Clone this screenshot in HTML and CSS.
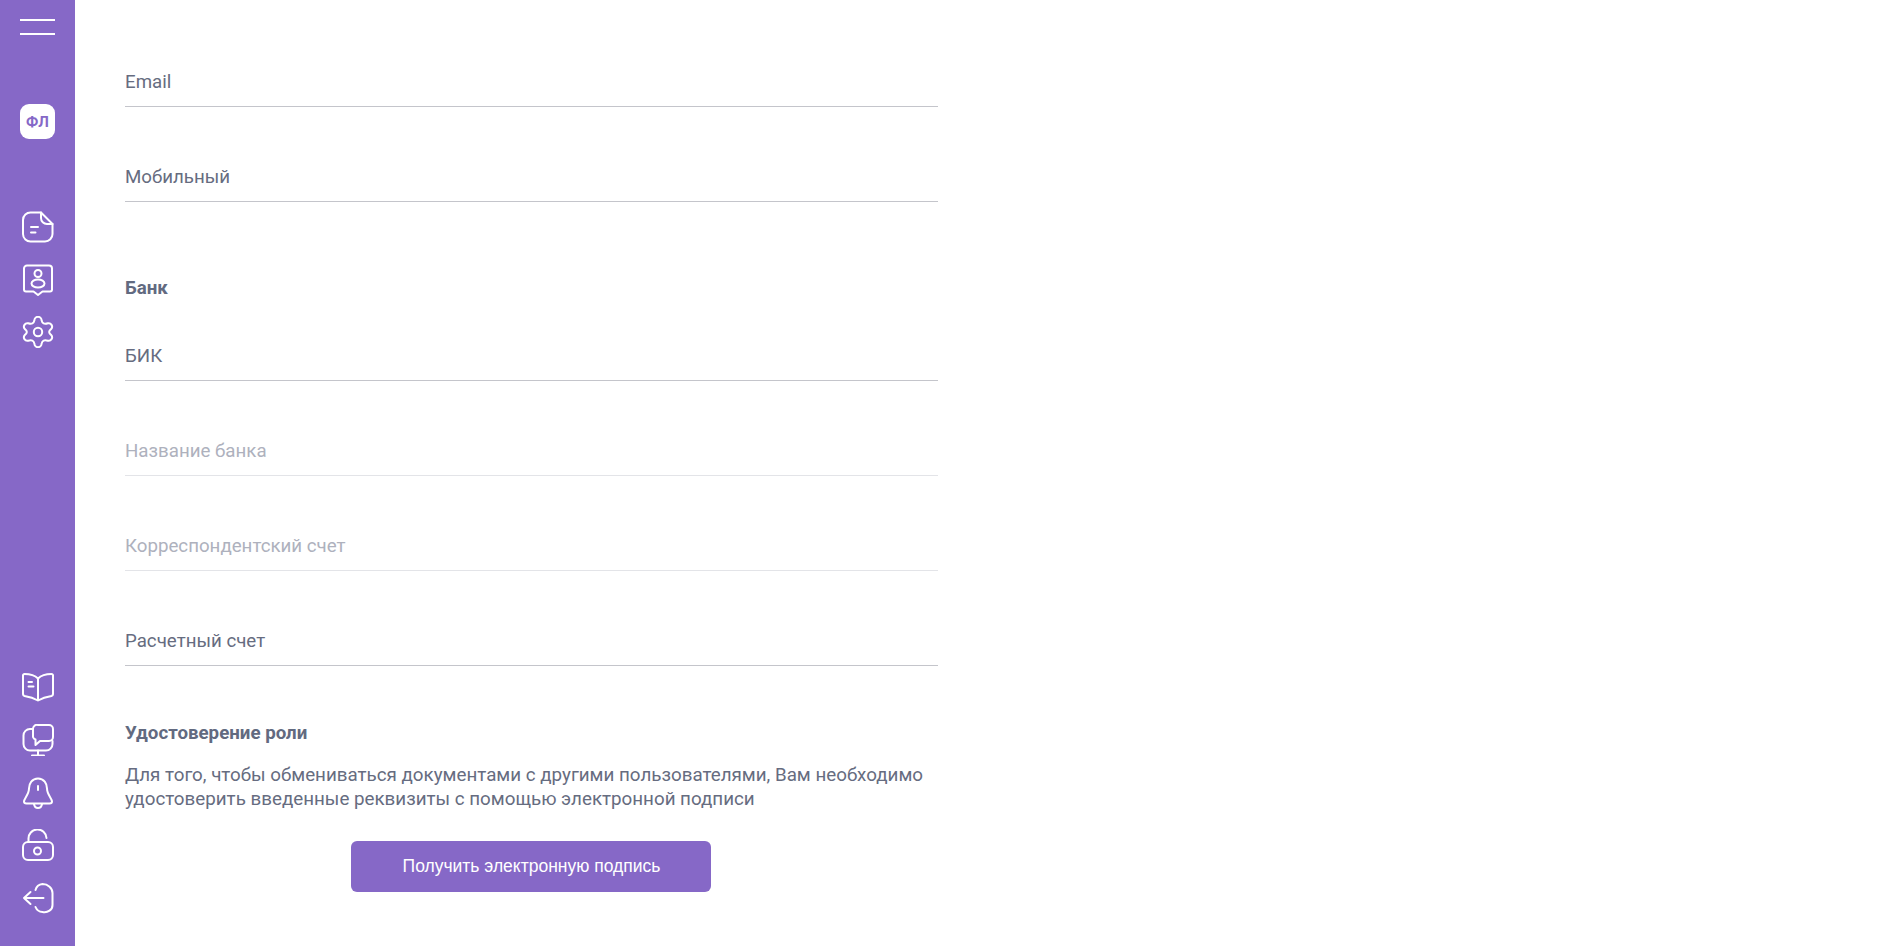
FILE: index.html
```html
<!DOCTYPE html>
<html lang="ru">
<head>
<meta charset="utf-8">
<title>Профиль</title>
<link rel="stylesheet" href="styles.css">
</head>
<body>
<div class="app">
  <aside class="sidebar">
    <div class="burger"><span></span><span></span></div>
    <div class="badge">ФЛ</div>
    <nav class="nav-top">
      <svg class="ico" viewBox="0 0 32 32"><path d="M19 1.500H9A7.500 7.500 0 0 0 1 9v14A7.500 7.500 0 0 0 9 30.500h14a7.500 7.500 0 0 0 7.500-7.500V13z"/><path d="M19 1.500V7a6 6 0 0 0 6 6h5.500"/><path d="M9 16h7M9 21.500h4.500"/></svg>
      <svg class="ico" viewBox="0 0 32 32"><path d="M5 1.500h22a3 3 0 0 1 3 3v21a2 2 0 0 1-2 2h-7.500L16 31l-4.500-3.500H4a2 2 0 0 1-2-2v-21a3 3 0 0 1 3-3z"/><circle cx="16" cy="9.500" r="3.500"/><ellipse cx="16" cy="19.500" rx="6.500" ry="4"/></svg>
      <svg class="ico" viewBox="0 0 32 32"><circle cx="16" cy="16" r="4.200"/><path d="M12.400 4.400A3.500 3.500 0 0 1 19.600 4.400Q20.500 9 25.800 7.300A3.500 3.500 0 0 1 29.300 12.900Q25 16 29.300 19.100A3.500 3.500 0 0 1 25.800 24.700Q20.500 23 19.600 27.600A3.500 3.500 0 0 1 12.400 27.600Q11.500 23 6.200 24.700A3.500 3.500 0 0 1 2.700 19.100Q7 16 2.700 12.900A3.500 3.500 0 0 1 6.200 7.300Q11.500 9 12.400 4.400z"/></svg>
    </nav>
    <nav class="nav-bottom">
      <svg class="ico" viewBox="0 0 32 32"><path d="M16 7.500 C13 4.500 7 3 2.500 3 A1.500 1.500 0 0 0 1 4.500V23a2 2 0 0 0 1.500 2c4 .7 9 2 13.500 4.500 4.500-2.500 9.500-3.800 13.500-4.500a2 2 0 0 0 1.500-2V4.500A1.500 1.500 0 0 0 29.500 3C25 3 19 4.500 16 7.500zM16 7.500v22"/><path d="M6.500 11H10M6.500 15.500h5"/></svg>
      <svg class="ico" viewBox="0 0 32 32"><path d="M11 5H8a6.500 6.500 0 0 0-6.500 6.500v8.500A6.500 6.500 0 0 0 8 26.500h16a6.500 6.500 0 0 0 6.500-6.500v-3"/><path d="M16 26.500v5M10 31.500h12"/><path d="M16 1h11a4 4 0 0 1 4 4v8a4 4 0 0 1-4 4h-9l-4.500 4v-5.500A4 4 0 0 1 11 13V5a4 4 0 0 1 5-4z"/></svg>
      <svg class="ico" viewBox="0 0 32 32"><path d="M16 1.500C10 1.500 7 6.500 7 11.500c0 6-5 10-5 13 0 1.500 1 2 2.500 2h23c1.500 0 2.500-.5 2.500-2 0-3-5-7-5-13 0-5-3-10-9-10z"/><path d="M12 27c.5 3 2 4 4 4s3.500-1 4-4M16 9v4"/></svg>
      <svg class="ico" viewBox="0 0 32 32"><path d="M6.500 13V10a9 9 0 0 1 18-1"/><rect x="1" y="13" width="30" height="18" rx="5"/><circle cx="15.500" cy="22" r="3.500"/></svg>
      <svg class="ico" viewBox="0 0 32 32"><path d="M13.500 8a8 8 0 0 1 7-6a10 9 0 0 1 10 9v12a8 7 0 0 1-10 7a8 8 0 0 1-7-5"/><path d="M21.500 16H2M8.500 10 2 16l6.500 6"/></svg>
    </nav>
  </aside>
  <main class="content">
    <div class="field"><span class="label">Email</span></div>
    <div class="field"><span class="label">Мобильный</span></div>
    <h2 class="heading heading-bank">Банк</h2>
    <div class="field field-first"><span class="label">БИК</span></div>
    <div class="field field-off"><span class="label">Название банка</span></div>
    <div class="field field-off"><span class="label">Корреспондентский счет</span></div>
    <div class="field"><span class="label">Расчетный счет</span></div>
    <h2 class="heading heading-role">Удостоверение роли</h2>
    <p class="note">Для того, чтобы обмениваться документами с другими пользователями, Вам необходимо удостоверить введенные реквизиты с помощью электронной подписи</p>
    <div class="actions"><button class="btn" type="button">Получить электронную подпись</button></div>
  </main>
</div>
</body>
</html>
```
FILE: styles.css
```css
* { box-sizing: border-box; }
html, body { margin: 0; height: 100%; overflow: hidden; background: #fff; }
body { font-family: Roboto, "Liberation Sans", sans-serif; color: #626a80; }
.app { display: flex; height: 946px; }
.sidebar { width: 75px; flex: none; background: #8668c7; display: flex; flex-direction: column; align-items: center; }
.burger { width: 35px; margin-top: 19px; display: flex; flex-direction: column; gap: 12px; }
.burger span { display: block; height: 2px; background: #fff; }
.badge { width: 35px; height: 35px; margin-top: 69px; border-radius: 9px; background: #fff; color: #8668c7; font-size: 15px; font-weight: 700; display: flex; align-items: center; justify-content: center; }
.nav-top, .nav-bottom { display: flex; flex-direction: column; align-items: center; gap: 20.500px; }
.nav-top { margin-top: 72px; }
.nav-bottom { margin-top: auto; margin-bottom: 32px; gap: 20.700px; }
.ico { width: 32px; height: 32px; fill: none; stroke: #fff; stroke-width: 2; stroke-linecap: round; stroke-linejoin: round; display: block; }
.content { width: 863px; padding: 0 0 0 50px; }
.field { width: 813px; height: 95px; border-bottom: 1px solid #c4c5cb; display: flex; align-items: flex-end; padding-bottom: 12px; }
.field:first-child { height: 107px; }
.field-first { height: 81px; }
.label { font-size: 18.720px; line-height: 24px; color: #666c80; }
.field-off { border-bottom-color: #e3e4e8; }
.field-off .label { color: #aeb1bd; }
.heading { margin: 0; font-size: 18.720px; line-height: 24px; font-weight: 700; color: #626a80; }
.heading-bank { margin-top: 74px; }
.heading-role { margin-top: 55px; }
.note { margin: 19px 0 0; width: 813px; font-size: 18.770px; line-height: 23.500px; color: #666c80; }
.actions { width: 811px; display: flex; justify-content: center; margin-top: 30px; }
.btn { width: 360px; height: 51px; border: 0; border-radius: 6px; padding: 0 0 0 2px; background: #8668c7; color: #fff; font-family: "Liberation Sans", Arial, sans-serif; font-size: 17.500px; }
```
